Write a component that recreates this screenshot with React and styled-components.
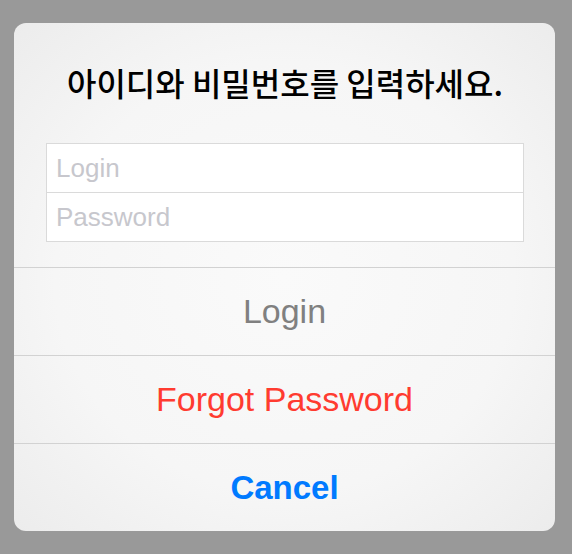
import React from 'react'
import styled, { createGlobalStyle } from 'styled-components'

const GlobalStyle = createGlobalStyle`
  html, body {
    margin: 0;
    padding: 0;
    background: #999999;
  }
  body {
    font-family: "Liberation Sans", Arial, sans-serif;
  }
`;

function App() {
  return (
    <Page>
      <GlobalStyle />
      <Dialog>
        <Header>
          <Title>아이디와 비밀번호를 입력하세요.</Title>
          <Fields>
            <Field placeholder="Login" />
            <Field placeholder="Password" type="password" />
          </Fields>
        </Header>
        <Action tone="#808080">Login</Action>
        <Action tone="#ff3b30">Forgot Password</Action>
        <Action tone="#007aff" bold>Cancel</Action>
      </Dialog>
    </Page>
  )
}

export default App

const Page = styled.div`
  width: 572px;
  height: 554px;
  box-sizing: border-box;
  padding: 23px 17px 0 14px;
`;

const Dialog = styled.div`
  width: 541px;
  border-radius: 12px;
  overflow: hidden;
  background: radial-gradient(ellipse at center, #fafafa 0%, #f6f6f6 60%, #ececec 100%);
`;

const Header = styled.div`
  padding: 39px 32px 25px 33px;
  display: flex;
  flex-direction: column;
  align-items: center;
`;

const Title = styled.h1`
  margin: 0 0 41px;
  height: 40px;
  line-height: 40px;
  font-family: "Noto Sans CJK KR", sans-serif;
  font-size: 32px;
  font-weight: 500;
  color: #000;
  white-space: nowrap;
`;

const Fields = styled.div`
  width: 100%;
  display: flex;
  flex-direction: column;
  border: 1px solid #dadada;
  background: #fff;
`;

const Field = styled.input`
  height: 48px;
  box-sizing: border-box;
  border: none;
  outline: none;
  padding: 0 9px;
  font-family: "Liberation Sans", Arial, sans-serif;
  font-size: 26px;
  background: #fff;
  & + & {
    border-top: 1px solid #dadada;
    height: 49px;
  }
  &::placeholder {
    color: #c7c7cd;
  }
`;

const Action = styled.div`
  height: 87px;
  border-top: 1px solid #d2d2d2;
  display: flex;
  align-items: center;
  justify-content: center;
  font-size: ${p => (p.bold ? 33 : 34)}px;
  font-weight: ${p => (p.bold ? 700 : 400)};
  color: ${p => p.tone};
`;
